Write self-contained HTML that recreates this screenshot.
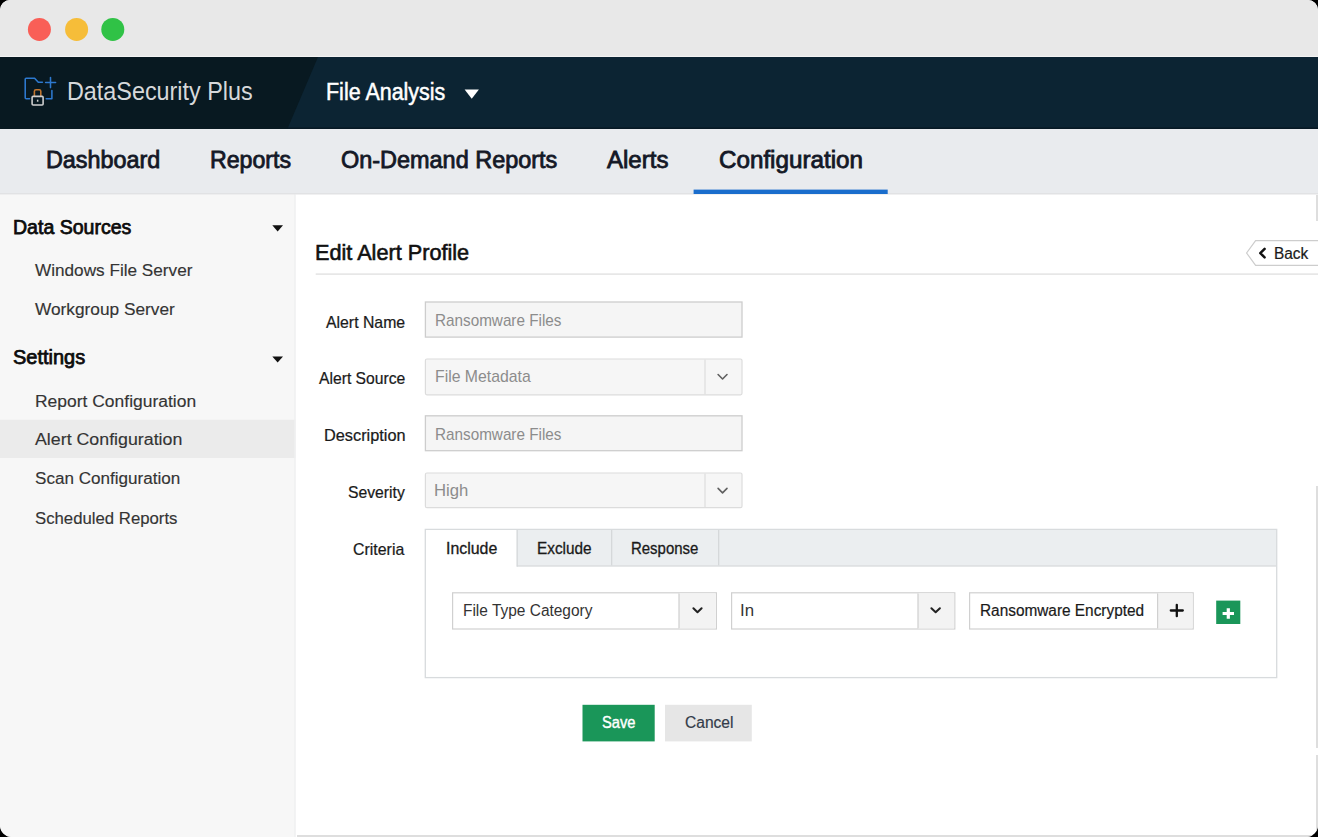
<!DOCTYPE html>
<html lang="en"><head><meta charset="utf-8"><title>DataSecurity Plus - Edit Alert Profile</title>
<style>
html,body{margin:0;padding:0;background:#000;}
body{width:1318px;height:837px;overflow:hidden;font-family:"Liberation Sans",sans-serif;}
#win{position:relative;width:1318px;height:837px;background:#fff;border-radius:10px 10px 12px 12px;overflow:hidden;}
#win>div,#win>svg{position:absolute;}
.tb{left:0;top:0;width:1318px;height:57px;background:#e8e8e8;}
.hd{left:0;top:57px;width:1318px;height:72px;background:#0c2433;}
.nav{left:0;top:129px;width:1318px;height:65px;background:#e9ebee;}
#ov{left:0;top:0;}
.t{position:absolute;white-space:nowrap;line-height:1;transform-origin:0 0;display:block;font-family:"Liberation Sans",sans-serif;font-weight:400;}
.g{display:contents;}
</style></head>
<body>
<div id="win">
<div class="tb"></div>
<div class="hd"></div>
<div class="nav"></div>
<svg id="ov" width="1318" height="837" viewBox="0 0 1318 837" fill="none">
<!-- sidebar -->
<rect x="0" y="194.4" width="295.5" height="643" fill="#f7f7f7"/>
<rect x="0" y="419.8" width="295.5" height="38.2" fill="#ebebeb"/>
<rect x="294.2" y="194.4" width="1.5" height="643" fill="#eff0f1"/>
<rect x="0" y="55.9" width="1318" height="1.1" fill="#f3f3f3"/>
<rect x="0" y="127.4" width="1318" height="1.6" fill="#04101a" opacity="0.55"/>
<rect x="0" y="193" width="1318" height="1.5" fill="#e1e2e4"/>
<!-- window dots -->
<circle cx="39.4" cy="29.4" r="11.5" fill="#f95f57"/>
<circle cx="76.6" cy="29.4" r="11.5" fill="#f6bd39"/>
<circle cx="112.8" cy="29.4" r="11.5" fill="#30c246"/>
<!-- header left slanted panel -->
<polygon points="0,57 318,57 287.4,129 0,129" fill="#081921"/>
<!-- logo -->
<g stroke-linecap="round" stroke-linejoin="round">
<path d="M29.6 98.7 H26.2 Q25.2 98.7 25.2 97.7 V79.2 Q25.2 78.2 26.2 78.2 H34.6 L38.3 82.2 H42.4" stroke="#2d79cf" stroke-width="1.55"/>
<path d="M46.2 98.7 H51.9 V90.6" stroke="#2d79cf" stroke-width="1.55"/>
<path d="M45.6 82.4 H55.6 M50.5 77.4 V87.6" stroke="#2d79cf" stroke-width="1.55"/>
<path d="M34.4 96 V91.3 Q34.4 89.7 36 89.7 H39.2 Q40.8 89.7 40.8 91.3 V96" stroke="#c0752e" stroke-width="1.6"/>
<rect x="32.1" y="96.4" width="11" height="8.6" rx="1" stroke="#cfcfcf" stroke-width="1.6" fill="#081921"/>
<rect x="36.9" y="99.7" width="1.5" height="2" fill="#cfcfcf"/>
</g>
<polygon points="464.6,89.6 478.9,89.6 471.75,98.8" fill="#fff"/>
<!-- nav underline -->
<rect x="693.6" y="189.6" width="194.1" height="4.4" fill="#1a6dcc"/>
<!-- sidebar carets -->
<polygon points="272.3,225.2 283,225.2 277.65,231.4" fill="#111"/>
<polygon points="272.3,356.4 283,356.4 277.65,362.6" fill="#111"/>
<!-- title rule -->
<rect x="315.7" y="273.4" width="1003" height="1.4" fill="#e1e1e1"/>
<!-- back button -->
<path d="M1319 240.6 H1255.6 L1246.6 253 L1255.6 265.4 H1319" stroke="#cdcdcd" stroke-width="1.2" fill="#fff"/>
<path d="M1264.6 248.9 L1260.3 253.1 L1264.6 257.3" stroke="#111" stroke-width="2.5" stroke-linecap="round" stroke-linejoin="round"/>
<!-- right edge strips -->
<rect x="1316" y="195" width="2" height="26" fill="#dedede"/>
<rect x="1316" y="486" width="2" height="262" fill="#dedede"/>
<rect x="1316" y="755" width="2" height="82" fill="#dedede"/>
<rect x="297" y="835" width="1021" height="2" fill="#dedede"/>
<!-- form fields -->
<rect x="425.4" y="302.0" width="316.6" height="35.1" fill="#f5f5f5" stroke="#cdcdcd" stroke-width="1.3"/>
<rect x="425.4" y="359.0" width="316.6" height="35.8" rx="1.5" fill="#f6f6f6" stroke="#dcdcdc" stroke-width="1.2"/>
<rect x="704.4" y="359.6" width="1.2" height="34.6" fill="#dcdcdc"/>
<rect x="425.4" y="415.8" width="316.6" height="34.9" fill="#f5f5f5" stroke="#cdcdcd" stroke-width="1.3"/>
<rect x="425.4" y="473.0" width="316.6" height="34.7" rx="1.5" fill="#f6f6f6" stroke="#dcdcdc" stroke-width="1.2"/>
<rect x="704.4" y="473.6" width="1.2" height="33.6" fill="#dcdcdc"/>
<g stroke="#606060" stroke-width="1.6" stroke-linecap="round" stroke-linejoin="round">
<path d="M718.1 374.5 L722.55 379 L727 374.5"/><path d="M718.1 488.4 L722.55 492.9 L727 488.4"/></g>
<!-- criteria panel -->
<rect x="425.3" y="529.4" width="851.4" height="148.2" fill="#fff" stroke="#d8dbdd" stroke-width="1.3"/>
<rect x="426" y="530" width="850" height="35.4" fill="#ebeef0"/>
<rect x="426" y="565.3" width="850" height="1.3" fill="#d5d8da"/>
<rect x="426" y="530" width="90.8" height="37" fill="#fff"/>
<rect x="516.5" y="530" width="1.3" height="36.6" fill="#d5d8da"/>
<rect x="611" y="530" width="1.3" height="35.4" fill="#d5d8da"/>
<rect x="718" y="530" width="1.3" height="35.4" fill="#d5d8da"/>
<!-- criteria row -->
<rect x="452.6" y="592.8" width="263.8" height="36.2" fill="#fff" stroke="#d0d0d0" stroke-width="1.2"/>
<rect x="679" y="593.4" width="36.8" height="35" fill="#f3f3f3"/>
<rect x="678.4" y="593.4" width="1.2" height="35" fill="#d0d0d0"/>
<rect x="731.6" y="592.8" width="223.2" height="36.2" fill="#fff" stroke="#d0d0d0" stroke-width="1.2"/>
<rect x="918" y="593.4" width="36.2" height="35" fill="#f3f3f3"/>
<rect x="917.4" y="593.4" width="1.2" height="35" fill="#d0d0d0"/>
<rect x="969.6" y="592.8" width="223.6" height="36.2" fill="#fff" stroke="#d0d0d0" stroke-width="1.2"/>
<rect x="1157.6" y="593.4" width="35" height="35" fill="#f3f3f3"/>
<rect x="1157" y="593.4" width="1.2" height="35" fill="#d0d0d0"/>
<g stroke="#222" stroke-width="2" stroke-linecap="round" stroke-linejoin="round">
<path d="M693.4 608.3 L697.5 612.3 L701.6 608.3"/><path d="M931.4 608.3 L935.65 612.3 L939.9 608.3"/></g>
<path d="M1170.8 610.5 H1182.8 M1176.8 604.8 V616.2" stroke="#111" stroke-width="2.3" stroke-linecap="round"/>
<rect x="1216.2" y="600.6" width="24.1" height="23.4" fill="#1a9659"/>
<path d="M1222.6 613.5 H1234 M1228.3 608.2 V618.8" stroke="#fff" stroke-width="3.2"/>
<!-- buttons -->
<rect x="582.5" y="704.8" width="72.2" height="36.6" fill="#1a9659"/>
<rect x="665" y="704.8" width="86.8" height="36.6" fill="#e6e6e6"/>
</svg>

<header class="g">
<span class="t" style="left:67.03px;top:79.00px;font-size:25.0px;color:#d6d8da;transform:scaleX(0.9343);">DataSecurity Plus</span>
<span class="t" style="left:325.72px;top:81.00px;font-size:23.5px;color:#ffffff;transform:scaleX(0.9139);-webkit-text-stroke:0.5px #ffffff;">File Analysis</span>
</header>
<nav class="g">
<span class="t" style="left:46.09px;top:149.00px;font-size:23.0px;color:#141826;transform:scaleX(1.0159);-webkit-text-stroke:0.8px #141826;">Dashboard</span>
<span class="t" style="left:209.71px;top:149.00px;font-size:23.0px;color:#141826;transform:scaleX(1.0068);-webkit-text-stroke:0.8px #141826;">Reports</span>
<span class="t" style="left:340.67px;top:149.00px;font-size:23.0px;color:#141826;transform:scaleX(1.0193);-webkit-text-stroke:0.8px #141826;">On-Demand Reports</span>
<span class="t" style="left:607.12px;top:149.00px;font-size:23.0px;color:#141826;transform:scaleX(1.0448);-webkit-text-stroke:0.8px #141826;">Alerts</span>
<span class="t" style="left:718.91px;top:149.00px;font-size:23.0px;color:#141826;transform:scaleX(1.0523);-webkit-text-stroke:0.8px #141826;">Configuration</span>
</nav>
<aside class="g">
<span class="t" style="left:13.27px;top:218.00px;font-size:19.5px;color:#0c0c0c;transform:scaleX(1.0015);-webkit-text-stroke:0.75px #0c0c0c;">Data Sources</span>
<span class="t" style="left:34.61px;top:262.00px;font-size:17.25px;color:#343434;transform:scaleX(0.9952);-webkit-text-stroke:0.15px #343434;">Windows File Server</span>
<span class="t" style="left:34.61px;top:301.00px;font-size:17.25px;color:#343434;transform:scaleX(1.0008);-webkit-text-stroke:0.15px #343434;">Workgroup Server</span>
<span class="t" style="left:12.71px;top:348.00px;font-size:19.5px;color:#0c0c0c;transform:scaleX(1.0237);-webkit-text-stroke:0.75px #0c0c0c;">Settings</span>
<span class="t" style="left:34.89px;top:393.00px;font-size:17.25px;color:#343434;transform:scaleX(1.0121);-webkit-text-stroke:0.15px #343434;">Report Configuration</span>
<span class="t" style="left:35.04px;top:431.00px;font-size:17.25px;color:#343434;transform:scaleX(1.0311);-webkit-text-stroke:0.15px #343434;">Alert Configuration</span>
<span class="t" style="left:34.63px;top:470.00px;font-size:17.25px;color:#343434;transform:scaleX(0.9898);-webkit-text-stroke:0.15px #343434;">Scan Configuration</span>
<span class="t" style="left:34.83px;top:510.00px;font-size:17.25px;color:#343434;transform:scaleX(0.9709);-webkit-text-stroke:0.15px #343434;">Scheduled Reports</span>
</aside>
<main class="g">
<span class="t" style="left:314.90px;top:242.00px;font-size:22.5px;color:#111111;transform:scaleX(0.9629);-webkit-text-stroke:0.6px #111111;">Edit Alert Profile</span>
<span class="t" style="left:1274.47px;top:246.00px;font-size:16.0px;color:#1a1a1a;transform:scaleX(0.9631);-webkit-text-stroke:0.2px #1a1a1a;">Back</span>
<span class="t" style="left:325.60px;top:315.00px;font-size:15.75px;color:#1a1a1a;transform:scaleX(1.0043);-webkit-text-stroke:0.22px #1a1a1a;">Alert Name</span>
<span class="t" style="left:319.01px;top:371.00px;font-size:15.75px;color:#1a1a1a;transform:scaleX(0.9961);-webkit-text-stroke:0.22px #1a1a1a;">Alert Source</span>
<span class="t" style="left:324.21px;top:428.00px;font-size:15.75px;color:#1a1a1a;transform:scaleX(1.0348);-webkit-text-stroke:0.22px #1a1a1a;">Description</span>
<span class="t" style="left:348.28px;top:485.00px;font-size:15.75px;color:#1a1a1a;transform:scaleX(0.9976);-webkit-text-stroke:0.22px #1a1a1a;">Severity</span>
<span class="t" style="left:352.84px;top:542.00px;font-size:15.75px;color:#1a1a1a;transform:scaleX(1.0102);-webkit-text-stroke:0.22px #1a1a1a;">Criteria</span>
<span class="t" style="left:435.11px;top:313.00px;font-size:15.75px;color:#8c8c8c;transform:scaleX(0.9694);">Ransomware Files</span>
<span class="t" style="left:434.74px;top:369.00px;font-size:15.75px;color:#8c8c8c;transform:scaleX(1.0025);">File Metadata</span>
<span class="t" style="left:435.11px;top:427.00px;font-size:15.75px;color:#8c8c8c;transform:scaleX(0.9694);">Ransomware Files</span>
<span class="t" style="left:434.26px;top:483.00px;font-size:15.75px;color:#8c8c8c;transform:scaleX(1.0582);">High</span>
<span class="t" style="left:446.22px;top:541.00px;font-size:15.75px;color:#1a1a1a;transform:scaleX(1.0091);-webkit-text-stroke:0.3px #1a1a1a;">Include</span>
<span class="t" style="left:537.25px;top:541.00px;font-size:15.75px;color:#1a1a1a;transform:scaleX(0.9740);-webkit-text-stroke:0.3px #1a1a1a;">Exclude</span>
<span class="t" style="left:630.97px;top:541.00px;font-size:15.75px;color:#1a1a1a;transform:scaleX(0.9492);-webkit-text-stroke:0.3px #1a1a1a;">Response</span>
<span class="t" style="left:463.14px;top:603.00px;font-size:16.0px;color:#333333;transform:scaleX(0.9659);">File Type Category</span>
<span class="t" style="left:739.55px;top:603.00px;font-size:16.0px;color:#333333;transform:scaleX(1.0517);">In</span>
<span class="t" style="left:979.75px;top:603.00px;font-size:16.0px;color:#1a1a1a;transform:scaleX(0.9610);-webkit-text-stroke:0.2px #1a1a1a;">Ransomware Encrypted</span>
<span class="t" style="left:602.31px;top:715.00px;font-size:16.0px;color:#ffffff;transform:scaleX(0.9172);-webkit-text-stroke:0.4px #ffffff;">Save</span>
<span class="t" style="left:684.94px;top:715.00px;font-size:16.0px;color:#333b4a;transform:scaleX(0.9724);-webkit-text-stroke:0.2px #333b4a;">Cancel</span>
</main>
</div>
</body></html>
